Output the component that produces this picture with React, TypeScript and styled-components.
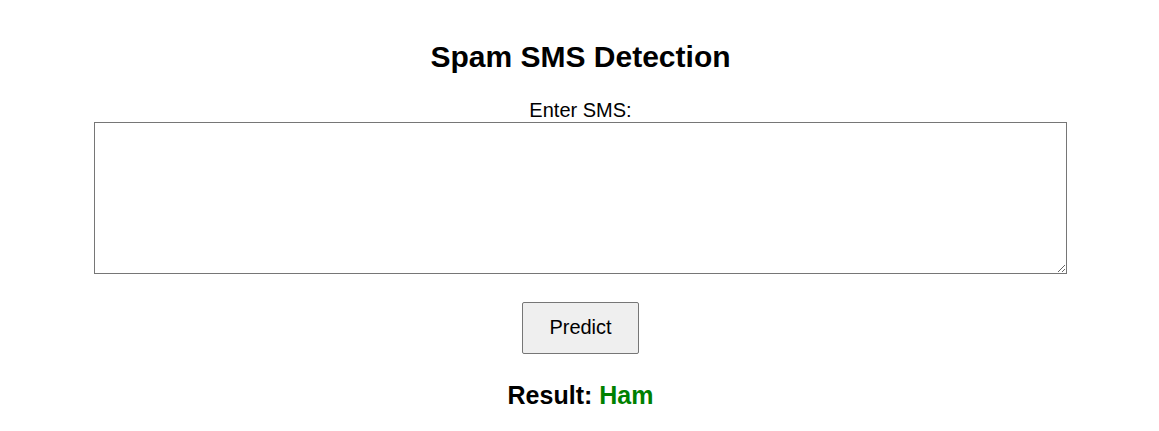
import styled, { createGlobalStyle } from "styled-components";

const GlobalStyle = createGlobalStyle`
  body {
    margin: 0;
    background: #ffffff;
    font-family: "Liberation Sans", Arial, sans-serif;
    color: #000000;
  }
`;

const Page = styled.div`
  display: flex;
  flex-direction: column;
  align-items: center;
  padding: 40px 0 0 2px;
  font-size: 20px;
`;

const Title = styled.h2`
  margin: 0 0 25px;
  font-size: 30px;
  font-weight: bold;
  line-height: normal;
`;

const Form = styled.form`
  display: flex;
  flex-direction: column;
  align-items: center;
  width: 973px;
`;

const Label = styled.label`
  display: block;
  font-size: 20px;
  line-height: 23px;
`;

const MessageBox = styled.textarea`
  box-sizing: border-box;
  width: 973px;
  height: 152px;
  padding: 2px;
  border: 1px solid #767676;
  border-radius: 0;
  font-family: "Liberation Mono", monospace;
  font-size: 13px;
  resize: both;
`;

const PredictButton = styled.button`
  margin-top: 28px;
  padding: 13px 26px 14px;
  background: #efefef;
  border: 1px solid #767676;
  border-radius: 2px;
  font-family: "Liberation Sans", Arial, sans-serif;
  font-size: 20px;
  line-height: 23px;
  color: #000000;
  cursor: pointer;
`;

const Result = styled.h3`
  margin: 27px 0 0;
  font-size: 25px;
  font-weight: bold;
  line-height: normal;
`;

const Verdict = styled.span<{ $spam?: boolean }>`
  color: ${({ $spam }) => ($spam ? "#d00000" : "#008000")};
`;

export default function App() {
  return (
    <>
      <GlobalStyle />
      <Page>
        <Title>Spam SMS Detection</Title>
        <Form onSubmit={(e) => e.preventDefault()}>
          <Label htmlFor="sms">Enter SMS:</Label>
          <MessageBox id="sms" name="sms" />
          <PredictButton type="submit">Predict</PredictButton>
        </Form>
        <Result>
          Result: <Verdict>Ham</Verdict>
        </Result>
      </Page>
    </>
  );
}
